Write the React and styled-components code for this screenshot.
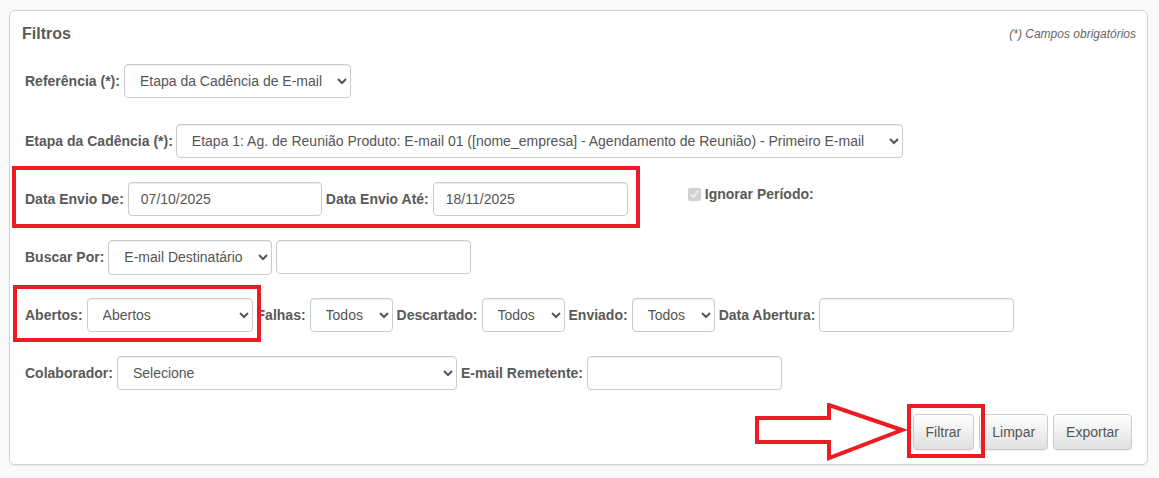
import React from "react";
import styled, { createGlobalStyle } from "styled-components";

const Global = createGlobalStyle`
  html, body { margin: 0; padding: 0; background: #f9f9f9; }
  body { font-family: "Liberation Sans", Arial, Helvetica, sans-serif; color: #555; }
  * { box-sizing: border-box; }
`;

const Page = styled.div`
  width: 1159px;
  height: 478px;
  padding: 10px 11px 0 9px;
`;

const Card = styled.section`
  position: relative;
  width: 1139px;
  height: 455px;
  background: #fff;
  border: 1px solid #d2d2d2;
  border-radius: 6px;
  box-shadow: 0 1px 1px rgba(0, 0, 0, 0.06);
  padding: 13px 11px 14px 12px;
  display: flex;
  flex-direction: column;
`;

const Header = styled.div`
  display: flex;
  justify-content: space-between;
  align-items: center;
  height: 20px;
`;

const Title = styled.h3`
  margin: 0;
  font-size: 16px;
  font-weight: bold;
  color: #5a5a5a;
`;

const Note = styled.span`
  font-size: 12px;
  font-style: italic;
  color: #666;
`;

const Form = styled.div`
  display: flex;
  flex-direction: column;
  gap: 24px;
  margin-top: 20px;
  padding-left: 3px;
`;

const Row = styled.div`
  display: flex;
  align-items: center;
  gap: 4px;
  height: 34px;
  margin-bottom: ${(p) => p.$extra || 0}px;
`;

const Label = styled.label`
  font-size: 14px;
  font-weight: bold;
  color: #595959;
  white-space: nowrap;
  margin-right: ${(p) => p.$mr || 0}px;
`;

const Select = styled.select`
  width: ${(p) => p.$w}px;
  height: ${(p) => p.$h || 34}px;
  padding: 6px 8px 6px 11px;
  font-family: "Liberation Sans", Arial, sans-serif;
  font-size: 14px;
  color: #555;
  background: #fff;
  border: 1px solid #ccc;
  border-radius: 4px;
  box-shadow: inset 0 1px 1px rgba(0, 0, 0, 0.075);
  flex: none;
`;

const Input = styled.input`
  width: ${(p) => p.$w || 195}px;
  height: 34px;
  padding: 6px 12px;
  font-family: "Liberation Sans", Arial, sans-serif;
  font-size: 14px;
  color: #555;
  background: #fff;
  border: 1px solid #ccc;
  border-radius: 4px;
  box-shadow: inset 0 1px 1px rgba(0, 0, 0, 0.075);
  flex: none;
`;

const CheckGroup = styled.label`
  display: flex;
  align-items: center;
  gap: 4px;
  align-self: flex-start;
  margin: 4px 0 0 56px;
  font-size: 14px;
  font-weight: bold;
  color: #595959;
  input { margin: 0; width: 13px; height: 13px; }
`;

const Actions = styled.div`
  display: flex;
  justify-content: flex-end;
  gap: 5px;
  margin-top: 24px;
  padding-right: 4px;
`;

const Button = styled.button`
  height: 36px;
  padding: 6px 12px;
  font-family: "Liberation Sans", Arial, sans-serif;
  font-size: 14px;
  color: #555;
  border: 1px solid #ccc;
  border-radius: 4px;
  background: linear-gradient(to bottom, #fff 0%, #e0e0e0 100%);
  box-shadow: inset 0 1px 0 rgba(255, 255, 255, 0.15), 0 1px 1px rgba(0, 0, 0, 0.075);
`;

const Highlight = styled.div`
  position: absolute;
  left: ${(p) => p.$x}px;
  top: ${(p) => p.$y}px;
  width: ${(p) => p.$w}px;
  height: ${(p) => p.$h}px;
  border: 4px solid #ed1c24;
  pointer-events: none;
`;

const ArrowMark = styled.svg`
  position: absolute;
  left: 745px;
  top: 392px;
  width: 152px;
  height: 60px;
  pointer-events: none;
`;

export default function App() {
  return (
    <>
      <Global />
      <Page>
        <Card>
          <Header>
            <Title>Filtros</Title>
            <Note>(*) Campos obrigatórios</Note>
          </Header>
          <Form>
            <Row $extra={2}>
              <Label>Referência (*):</Label>
              <Select $w={227} defaultValue="a">
                <option value="a">Etapa da Cadência de E-mail</option>
              </Select>
            </Row>
            <Row>
              <Label $mr={-1}>Etapa da Cadência (*):</Label>
              <Select $w={727} defaultValue="a">
                <option value="a">
                  Etapa 1: Ag. de Reunião Produto: E-mail 01 ([nome_empresa] - Agendamento de Reunião) - Primeiro E-mail
                </option>
              </Select>
            </Row>
            <Row>
              <Label>Data Envio De:</Label>
              <Input $w={194} defaultValue="07/10/2025" />
              <Label>Data Envio Até:</Label>
              <Input defaultValue="18/11/2025" />
              <CheckGroup>
                <input type="checkbox" checked disabled readOnly />
                Ignorar Período:
              </CheckGroup>
            </Row>
            <Row>
              <Label>Buscar Por:</Label>
              <Select $w={164} $h={35} defaultValue="a">
                <option value="a">E-mail Destinatário</option>
              </Select>
              <Input $w={195} />
            </Row>
            <Row>
              <Label>Abertos:</Label>
              <Select $w={166} defaultValue="a">
                <option value="a">Abertos</option>
              </Select>
              <Label>Falhas:</Label>
              <Select $w={83} defaultValue="a">
                <option value="a">Todos</option>
              </Select>
              <Label>Descartado:</Label>
              <Select $w={83} defaultValue="a">
                <option value="a">Todos</option>
              </Select>
              <Label>Enviado:</Label>
              <Select $w={83} defaultValue="a">
                <option value="a">Todos</option>
              </Select>
              <Label>Data Abertura:</Label>
              <Input $w={195} />
            </Row>
            <Row>
              <Label>Colaborador:</Label>
              <Select $w={340} defaultValue="a">
                <option value="a">Selecione</option>
              </Select>
              <Label>E-mail Remetente:</Label>
              <Input $w={195} />
            </Row>
          </Form>
          <Actions>
            <Button>Filtrar</Button>
            <Button>Limpar</Button>
            <Button>Exportar</Button>
          </Actions>

          <Highlight $x={2} $y={155} $w={628} $h={62} />
          <Highlight $x={3} $y={274} $w={248} $h={57} />
          <Highlight $x={897} $y={393} $w={78} $h={54} />
          <ArrowMark viewBox="0 0 152 60">
            <polygon
              points="12,26 84,26 84,13 157,38 84,66 84,50 12,50"
              transform="translate(-10,-11)"
              fill="none"
              stroke="#ed1c24"
              strokeWidth="4"
              strokeLinejoin="miter"
            />
          </ArrowMark>
        </Card>
      </Page>
    </>
  );
}
